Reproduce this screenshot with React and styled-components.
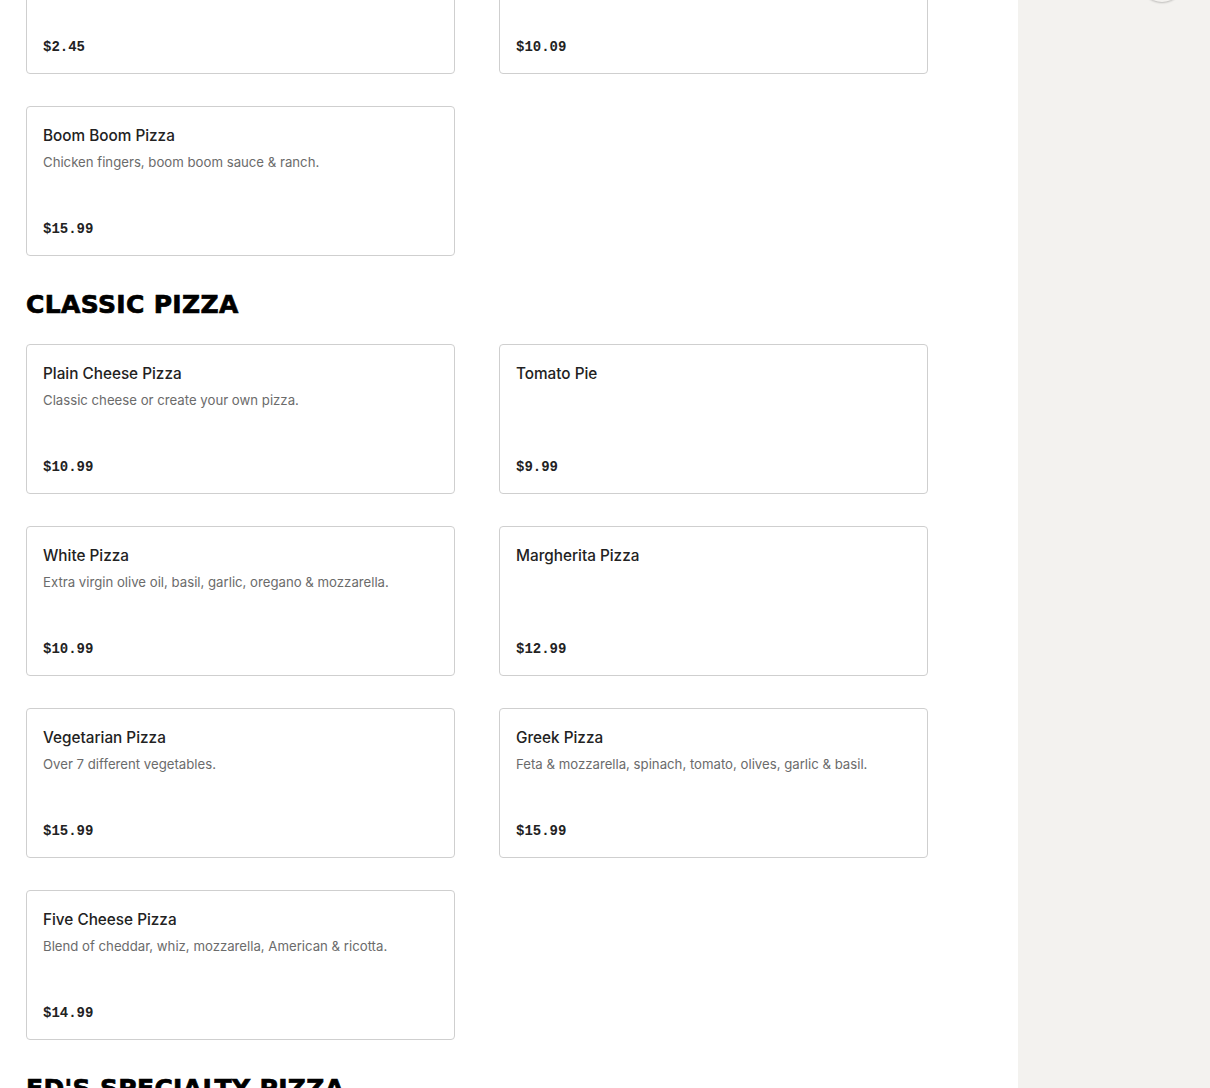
import React from "react";
import styled, { createGlobalStyle } from "styled-components";

const GlobalStyle = createGlobalStyle`
  html, body { margin: 0; padding: 0; background: #ffffff; }
  body { font-family: Inter, "Liberation Sans", Arial, sans-serif; color: #1f1f1f; overflow: hidden; }
  * { box-sizing: border-box; }
`;

const Page = styled.div`
  display: flex;
  width: 1210px;
  height: 1088px;
  overflow: hidden;
`;

const Main = styled.main`
  flex: 0 0 1018px;
  padding: 0 90px 0 26px;
`;

const Scrolled = styled.div`
  margin-top: -76px;
`;

const Sidebar = styled.aside`
  position: relative;
  flex: 1;
  background: #f3f2ef;
  overflow: hidden;
`;

const Avatar = styled.div`
  position: absolute;
  top: -42px;
  left: 122px;
  width: 44px;
  height: 44px;
  border-radius: 50%;
  background: #f3f2ef;
  box-shadow: 0 1px 2px rgba(0, 0, 0, 0.22);
`;

const Section = styled.section`
  display: flex;
  flex-direction: column;
`;

const Heading = styled.h2`
  margin: 33px 0 23px;
  font-family: "DejaVu Sans", "Liberation Sans", Arial, sans-serif;
  font-weight: 700;
  font-size: 25px;
  line-height: 32px;
  letter-spacing: 0.35px;
  color: #000;
  -webkit-text-stroke: 0.7px #000;
  text-transform: uppercase;
`;

const Grid = styled.div`
  display: grid;
  grid-template-columns: 429px 429px;
  column-gap: 44px;
  row-gap: 32px;
`;

const Card = styled.div`
  display: flex;
  flex-direction: column;
  height: 150px;
  padding: 17px 16px 15px;
  border: 1px solid #cfcfcf;
  border-radius: 4px;
  background: #fff;
`;

const Title = styled.div`
  font-size: 15.3px;
  line-height: 24px;
  font-weight: 500;
  color: #222;
`;

const Desc = styled.div`
  margin-top: 3px;
  font-size: 13.2px;
  line-height: 22px;
  color: #6b6b6b;
`;

const Price = styled.div`
  margin-top: auto;
  font-family: "Liberation Mono", "DejaVu Sans Mono", monospace;
  font-weight: 700;
  font-size: 14px;
  line-height: 22px;
  color: #222;
`;

const sections = [
  {
    title: null,
    items: [
      { name: "Pizza Slice", desc: "Classic cheese slice.", price: "$2.45" },
      { name: "Stromboli", desc: "Mozzarella & pepperoni.", price: "$10.09" },
      { name: "Boom Boom Pizza", desc: "Chicken fingers, boom boom sauce & ranch.", price: "$15.99" },
    ],
  },
  {
    title: "Classic Pizza",
    items: [
      { name: "Plain Cheese Pizza", desc: "Classic cheese or create your own pizza.", price: "$10.99" },
      { name: "Tomato Pie", desc: "", price: "$9.99" },
      { name: "White Pizza", desc: "Extra virgin olive oil, basil, garlic, oregano & mozzarella.", price: "$10.99" },
      { name: "Margherita Pizza", desc: "", price: "$12.99" },
      { name: "Vegetarian Pizza", desc: "Over 7 different vegetables.", price: "$15.99" },
      { name: "Greek Pizza", desc: "Feta & mozzarella, spinach, tomato, olives, garlic & basil.", price: "$15.99" },
      { name: "Five Cheese Pizza", desc: "Blend of cheddar, whiz, mozzarella, American & ricotta.", price: "$14.99" },
    ],
  },
  {
    title: "Ed's Specialty Pizza",
    items: [
      { name: "Buffalo Chicken Pizza", desc: "Buffalo chicken, blue cheese & mozzarella.", price: "$15.99" },
      { name: "Meat Lovers Pizza", desc: "Pepperoni, sausage, bacon & ham.", price: "$16.99" },
    ],
  },
];

export default function App() {
  return (
    <>
      <GlobalStyle />
      <Page>
        <Main>
          <Scrolled>
            {sections.map((s, i) => (
              <Section key={i}>
                {s.title && <Heading>{s.title}</Heading>}
                <Grid>
                  {s.items.map((it) => (
                    <Card key={it.name}>
                      <Title>{it.name}</Title>
                      {it.desc && <Desc>{it.desc}</Desc>}
                      <Price>{it.price}</Price>
                    </Card>
                  ))}
                </Grid>
              </Section>
            ))}
          </Scrolled>
        </Main>
        <Sidebar>
          <Avatar />
        </Sidebar>
      </Page>
    </>
  );
}
